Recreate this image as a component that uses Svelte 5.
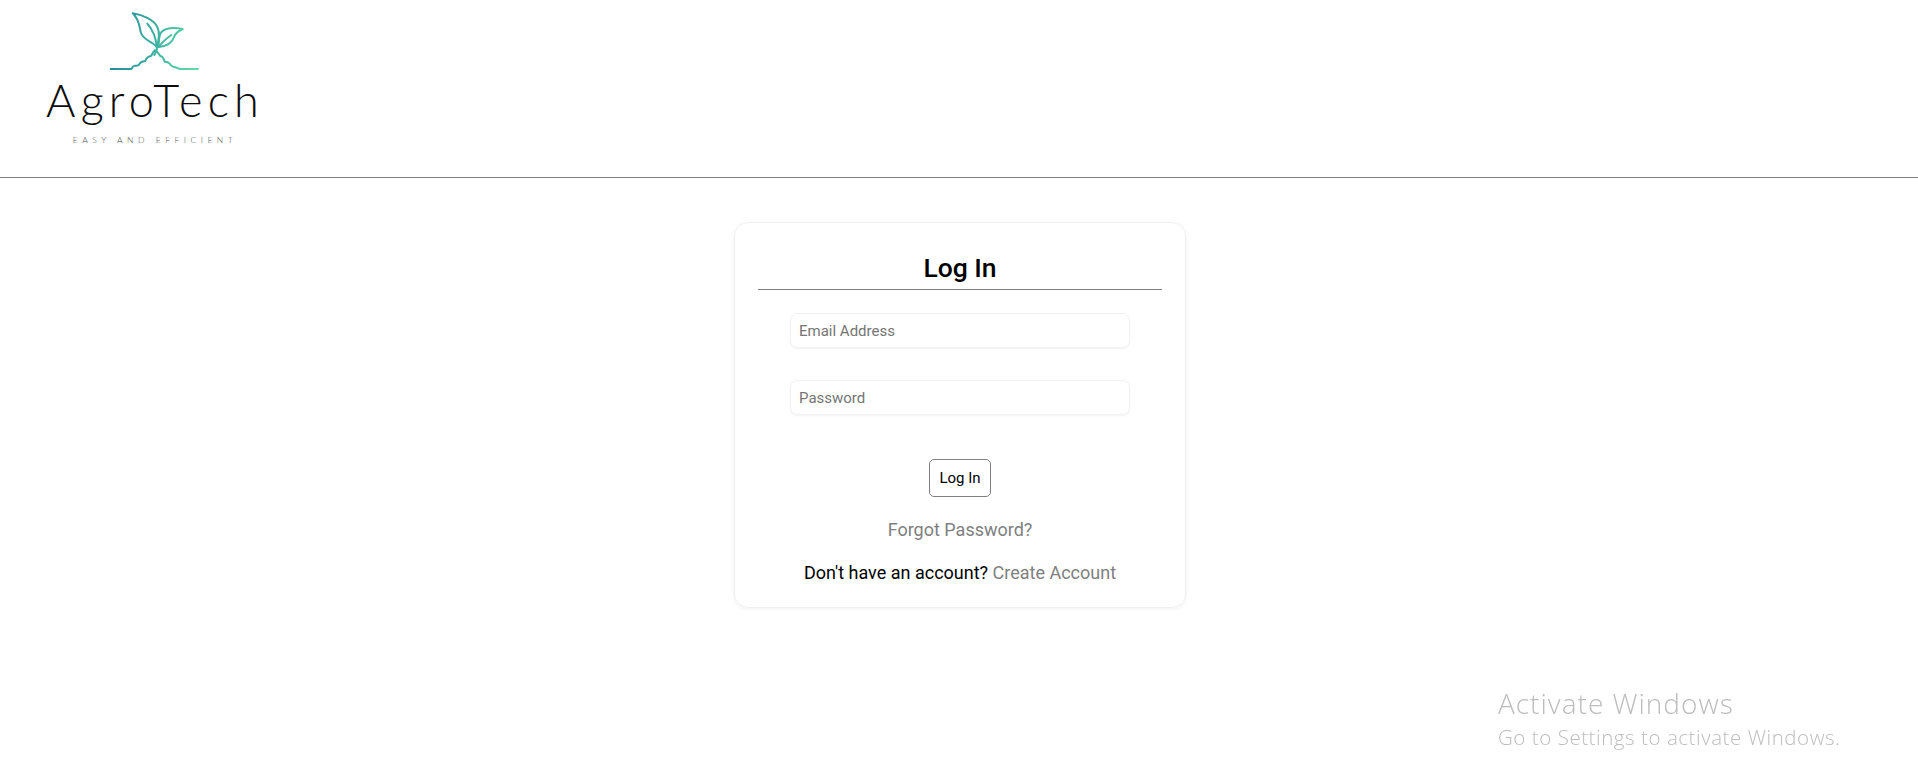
<script>
  let email = $state('');
  let password = $state('');
</script>

<div class="page">
  <header class="header">
    <div class="logo">
      <svg class="mark" viewBox="0 0 330 210" width="110" height="70" fill="none" aria-hidden="true">
        <defs>
          <linearGradient id="grad" gradientUnits="userSpaceOnUse" x1="30" y1="100" x2="295" y2="130">
            <stop offset="0" stop-color="#238a9c" />
            <stop offset="0.5" stop-color="#3bb0a0" />
            <stop offset="1" stop-color="#5fdcaa" />
          </linearGradient>
        </defs>
        <g stroke="url(#grad)" stroke-width="6" stroke-linecap="round" stroke-linejoin="round">
          <path d="M98 25C130 30 162 44 172 66C182 88 176 108 170 126C160 110 132 108 123 84C118 66 118 42 98 25Z" />
          <path d="M142 56C156 72 168 96 170 126" />
          <path d="M248 72C222 66 194 68 182 84C176 96 176 112 176 126C196 124 216 116 222 96C225 86 236 78 248 72Z" />
          <path d="M214 90C200 100 186 112 176 126" />
          <path d="M172 126C170 136 167 143 163 150" />
          <path d="M32 192H93C97 192 97 182 104 182C110 182 113 184 118 178C120 170 128 170 136 168C138 158 146 154 154 152C158 146 160 138 164 136C172 138 176 146 180 152C190 154 192 162 194 170C202 170 208 172 212 180C216 186 224 186 230 188C236 192 240 192 246 192H294" />
        </g>
      </svg>
      <div class="brand">AgroTech</div>
      <div class="tagline">EASY AND EFFICIENT</div>
    </div>
  </header>

  <main class="main">
    <form class="card" onsubmit={(e) => e.preventDefault()}>
      <h1 class="title">Log In</h1>
      <div class="fields">
        <input class="input" type="email" placeholder="Email Address" bind:value={email} />
        <input class="input" type="password" placeholder="Password" bind:value={password} />
      </div>
      <button class="submit" type="submit">Log In</button>
      <a class="forgot" href="#forgot">Forgot Password?</a>
      <p class="signup">Don't have an account? <a href="#create">Create Account</a></p>
    </form>
  </main>

  <div class="watermark">
    <div class="wm-title">Activate Windows</div>
    <div class="wm-sub">Go to Settings to activate Windows.</div>
  </div>
</div>

<style>
  :global(body) {
    margin: 0;
    background: #fff;
    overflow: hidden;
  }

  .page {
    height: 775px;
    font-family: Roboto, "Liberation Sans", sans-serif;
    color: #000;
  }

  .header {
    box-sizing: border-box;
    height: 178px;
    border-bottom: 1px solid #808080;
    padding: 8px 0 0 45px;
  }

  .logo {
    width: 220px;
    display: flex;
    flex-direction: column;
    align-items: center;
  }

  .mark {
    display: block;
    margin-top: -3px;
  }

  .brand {
    font-family: "Lato", sans-serif;
    font-weight: 300;
    font-size: 45px;
    line-height: 44px;
    letter-spacing: 5.2px;
    color: #0c0c0c;
    margin-top: 3px;
    white-space: nowrap;
  }

  .tagline {
    font-family: "Lato", sans-serif;
    font-weight: 300;
    font-size: 8.5px;
    line-height: 10px;
    letter-spacing: 4.5px;
    color: #555;
    margin-top: 13px;
    white-space: nowrap;
  }

  .main {
    display: flex;
    justify-content: center;
    padding: 44px 0 0 2px;
  }

  .card {
    box-sizing: border-box;
    width: 452px;
    height: 386px;
    border: 1px solid #f0f0f0;
    border-radius: 14px;
    box-shadow: 0 1px 4px rgba(0, 0, 0, 0.06);
    padding: 28px 23px 0;
    display: flex;
    flex-direction: column;
    align-items: center;
  }

  .title {
    width: 100%;
    box-sizing: border-box;
    margin: 0;
    font-size: 26.5px;
    font-weight: 500;
    line-height: 34px;
    height: 39px;
    text-align: center;
    border-bottom: 1px solid #808080;
  }

  .fields {
    display: flex;
    flex-direction: column;
    gap: 32px;
    margin-top: 23px;
  }

  .input {
    box-sizing: border-box;
    display: block;
    width: 340px;
    height: 35px;
    padding: 0 8px;
    border: 1px solid #f2f2f2;
    border-radius: 7px;
    box-shadow: 0 1px 2px rgba(0, 0, 0, 0.05);
    font-family: inherit;
    font-size: 15px;
    outline: none;
    background: #fff;
  }

  .input::placeholder {
    color: #757575;
    opacity: 1;
  }

  .submit {
    box-sizing: border-box;
    margin-top: 44px;
    width: 62px;
    height: 38px;
    padding: 0;
    background: #fff;
    border: 1px solid #808080;
    border-radius: 5px;
    font-family: inherit;
    font-size: 15px;
    color: #000;
  }

  .forgot {
    margin-top: 22px;
    font-size: 18px;
    line-height: 22px;
    color: #808080;
    text-decoration: none;
  }

  .signup {
    margin: 21px 0 0;
    font-size: 18px;
    line-height: 22px;
    white-space: nowrap;
  }

  .signup a {
    color: #808080;
    text-decoration: none;
  }

  .watermark {
    position: fixed;
    left: 1498px;
    top: 684px;
    font-family: "Open Sans", sans-serif;
    font-weight: 300;
    color: #bdbdbd;
    white-space: nowrap;
  }

  .wm-title {
    font-size: 28px;
    line-height: 38px;
    letter-spacing: 1px;
  }

  .wm-sub {
    font-size: 20.5px;
    line-height: 30px;
    letter-spacing: 0.55px;
  }
</style>
